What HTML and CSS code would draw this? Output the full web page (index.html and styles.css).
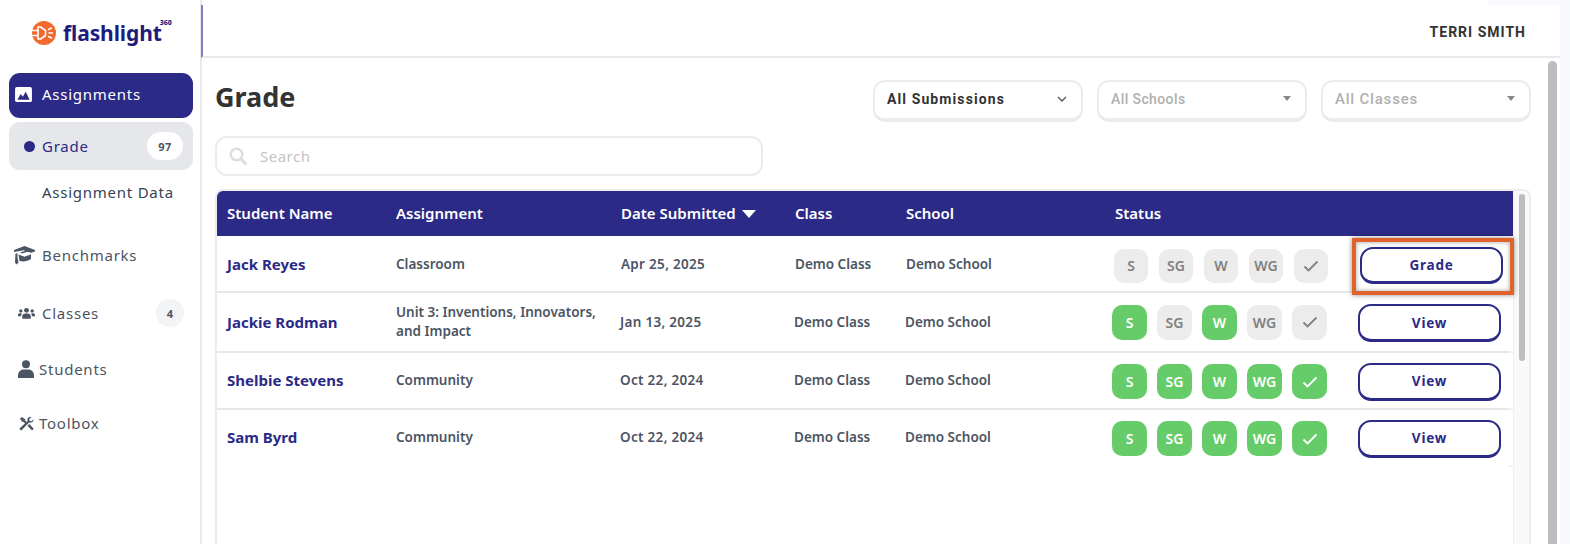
FILE: index.html
```html
<!DOCTYPE html>
<html lang="en">
<head>
  <meta charset="UTF-8" />
  <title>Flashlight 360 - Grade</title>
  <link rel="stylesheet" href="styles.css">
</head>
<body>
  <div class="app">
    <!-- Sidebar -->
    <aside class="sidebar">
      <div class="logo">
        <svg class="logo-mark" viewBox="0 0 24 24">
          <circle cx="12" cy="12" r="12" fill="#f26a2e"/>
          <path d="M0 9.500h6M0 14.500h6" stroke="#fff" stroke-width="1.600"/>
          <path d="M6 6h2.500l5 3.500v5l-5 3.500H6z" fill="none" stroke="#fff" stroke-width="1.600" stroke-linejoin="round"/>
          <path d="M16.500 8.500l3-1.500M17 12h3.500M16.500 15.500l3 1.500" stroke="#fff" stroke-width="1.400" stroke-linecap="round"/>
        </svg>
        <span class="logo-text">flashlight</span>
        <span class="logo-sup">360</span>
      </div>
      <nav class="nav">
        <a class="nav-item nav-active">
          <svg class="nav-icon" viewBox="0 0 18 16"><rect width="18" height="16" rx="2" fill="#fff"/><path d="M2.500 13.500l3.500-6 2.300 3L11.300 5l4.200 8.500z" fill="#2b2a86"/></svg>
          <span>Assignments</span>
        </a>
        <a class="nav-item nav-sub-active">
          <span class="dot"></span>
          <span>Grade</span>
          <span class="badge badge-white">97</span>
        </a>
        <a class="nav-item nav-sub">Assignment Data</a>
        <a class="nav-item nav-bench">
          <svg class="nav-icon nav-icon-cap" viewBox="0 0 21 21"><path d="M10.500 1L21 5v1.500c-1 .3-2.500.8-3.500 1.200C14 6.400 11.500 7 8 8.500L6 7.700l5-1.900-1-.6L0 7V5z" fill="#4b5563"/><path d="M4.500 9.500L10.500 11.800 17 9.300V14c-2 1.500-5 2.500-8 2.500-1.300 0-2.500-.2-3.500-.5z" fill="#4b5563"/><path d="M1.500 8.500h2v4l1 5-2 2-1.500-2z" fill="#4b5563"/></svg>
          <span>Benchmarks</span>
        </a>
        <a class="nav-item nav-classes">
          <svg class="nav-icon nav-icon-users" viewBox="0 0 18 12"><circle cx="9" cy="3.200" r="2.600" fill="#4b5563"/><circle cx="3" cy="3.800" r="1.800" fill="#4b5563"/><circle cx="15" cy="3.800" r="1.800" fill="#4b5563"/><path d="M4.500 12V9.500C4.500 7.500 6 6.500 7.500 6.500h3c1.500 0 3 1 3 3V12z" fill="#4b5563"/><path d="M0 9.500V8c0-1 .8-1.800 1.800-1.800h2.400C3.600 7 3.300 8 3.300 9.500zM18 9.500V8c0-1-.8-1.800-1.800-1.800h-2.400c.6.800.9 1.800.9 3.300z" fill="#4b5563"/></svg>
          <span>Classes</span>
          <span class="badge badge-gray">4</span>
        </a>
        <a class="nav-item nav-students">
          <svg class="nav-icon nav-icon-user" viewBox="0 0 16 18"><circle cx="8" cy="4.200" r="4" fill="#4b5563"/><path d="M0 18v-2.500C0 12 2.500 9.500 5.500 9.500h5c3 0 5.500 2.500 5.500 6V18z" fill="#4b5563"/></svg>
          <span>Students</span>
        </a>
        <a class="nav-item nav-toolbox">
          <svg class="nav-icon nav-icon-tools" viewBox="0 0 16 16"><path d="M1 3l2-2 3.500 2.500v1.300l3 3-1.500 1.500-3-3H3.700z" fill="#4b5563"/><path d="M15.500 3.500l-2.300 2.200-1.800-.5-.5-1.800L13.200 1c-1.800-.6-4 .6-4.200 2.800 0 .6.100 1 .2 1.400L1.300 12.500c-.8.800-.8 1.600-.2 2.200s1.500.6 2.200-.1l7.400-7.700c2.500.8 5.200-1 4.800-3.400z" fill="#4b5563"/><path d="M9 10.500l2-2 4 4.200c.6.600.6 1.300 0 1.900s-1.300.6-1.900 0z" fill="#4b5563"/></svg>
          <span>Toolbox</span>
        </a>
      </nav>
    </aside>

    <div class="main">
      <div class="top-strip"></div>
      <header class="topbar">
        <span class="user-name">TERRI SMITH</span>
      </header>
      <div class="content-wrap">
        <main class="content">
          <div class="title-row">
            <h1 class="page-title">Grade</h1>
            <div class="filters">
              <div class="filter filter-active">
                <span>All Submissions</span>
                <svg class="chevron" viewBox="0 0 10 6"><path d="M1 1l4 4 4-4" fill="none" stroke="#555" stroke-width="1.300"/></svg>
              </div>
              <div class="filter">
                <span>All Schools</span>
                <span class="caret"></span>
              </div>
              <div class="filter filter-classes">
                <span>All Classes</span>
                <span class="caret"></span>
              </div>
            </div>
          </div>

          <div class="search">
            <svg class="search-icon" viewBox="0 0 18 18"><circle cx="7.500" cy="7.500" r="5.800" fill="none" stroke="#dedede" stroke-width="2.400"/><path d="M12 12l4.500 4.500" stroke="#dedede" stroke-width="3" stroke-linecap="round"/></svg>
            <span>Search</span>
          </div>

          <div class="table-frame">
            <div class="table">
              <div class="table-head">
                <span>Student Name</span>
                <span>Assignment</span>
                <span class="sorted">Date Submitted<i class="sort-caret"></i></span>
                <span>Class</span>
                <span>School</span>
                <span>Status</span>
              </div>

              <div class="row row-first">
                <a class="student">Jack Reyes</a>
                <span>Classroom</span>
                <span class="date">Apr 25, 2025</span>
                <span>Demo Class</span>
                <span>Demo School</span>
                <div class="status">
                  <span class="pill">S</span><span class="pill">SG</span><span class="pill">W</span><span class="pill">WG</span>
                  <span class="pill"><svg class="check" viewBox="0 0 16 12"><path d="M1.500 6.500l4 4 9-9" fill="none" stroke="currentColor" stroke-width="1.800"/></svg></span>
                </div>
                <div class="callout"><button class="btn">Grade</button></div>
              </div>

              <div class="row row-tall">
                <a class="student">Jackie Rodman</a>
                <span class="assignment">Unit 3: Inventions, Innovators, and Impact</span>
                <span class="date">Jan 13, 2025</span>
                <span>Demo Class</span>
                <span>Demo School</span>
                <div class="status">
                  <span class="pill pill-done">S</span><span class="pill">SG</span><span class="pill pill-done">W</span><span class="pill">WG</span>
                  <span class="pill"><svg class="check" viewBox="0 0 16 12"><path d="M1.500 6.500l4 4 9-9" fill="none" stroke="currentColor" stroke-width="1.800"/></svg></span>
                </div>
                <button class="btn">View</button>
              </div>

              <div class="row">
                <a class="student">Shelbie Stevens</a>
                <span>Community</span>
                <span class="date">Oct 22, 2024</span>
                <span>Demo Class</span>
                <span>Demo School</span>
                <div class="status">
                  <span class="pill pill-done">S</span><span class="pill pill-done">SG</span><span class="pill pill-done">W</span><span class="pill pill-done">WG</span>
                  <span class="pill pill-done"><svg class="check" viewBox="0 0 16 12"><path d="M1.500 6.500l4 4 9-9" fill="none" stroke="currentColor" stroke-width="1.800"/></svg></span>
                </div>
                <button class="btn">View</button>
              </div>

              <div class="row row-last">
                <a class="student">Sam Byrd</a>
                <span>Community</span>
                <span class="date">Oct 22, 2024</span>
                <span>Demo Class</span>
                <span>Demo School</span>
                <div class="status">
                  <span class="pill pill-done">S</span><span class="pill pill-done">SG</span><span class="pill pill-done">W</span><span class="pill pill-done">WG</span>
                  <span class="pill pill-done"><svg class="check" viewBox="0 0 16 12"><path d="M1.500 6.500l4 4 9-9" fill="none" stroke="currentColor" stroke-width="1.800"/></svg></span>
                </div>
                <button class="btn">View</button>
              </div>
            </div>
            <div class="table-track"><div class="table-thumb"></div></div>
          </div>
        </main>
        <div class="page-track"></div>
      </div>
    </div>
    <div class="edge"></div>
  </div>
</body>
</html>
```

FILE: styles.css
```css
* {
  box-sizing: border-box;
}

html, body {
  margin: 0;
  height: 100%;
  overflow: hidden;
  background: #fff;
}

body {
  font-family: "Noto Sans", sans-serif;
  color: #333;
}

.app {
  display: flex;
  height: 544px;
  width: 1570px;
}

/* Sidebar */
.sidebar {
  width: 202px;
  flex-shrink: 0;
  border-right: 2px solid #e8e9ec;
  padding: 0 7px 0 9px;
}

.logo {
  height: 73px;
  display: flex;
  align-items: center;
  padding: 0 0 7px 23px;
}

.logo-mark {
  width: 24px;
  height: 24px;
  margin-right: 7px;
}

.logo-text {
  font-weight: 700;
  font-size: 21px;
  letter-spacing: -0.1px;
  color: #1f1c7c;
}

.logo-sup {
  font-weight: 800;
  font-size: 7px;
  color: #1f1c7c;
  margin: 0 0 22px -2px;
}

.nav-item {
  display: flex;
  align-items: center;
  height: 44px;
  font-size: 15px;
  letter-spacing: 0.75px;
  color: #4b5563;
}

.nav-active {
  height: 45px;
  margin-bottom: 4px;
  padding: 0 0 3px 6px;
  background: #2b2a86;
  border-radius: 11px;
  color: #fff;
}

.nav-active .nav-icon {
  width: 17px;
  height: 15px;
  margin-right: 10px;
}

.nav-sub-active {
  height: 48px;
  padding: 0 10px 0 15px;
  background: #e5e7eb;
  border-radius: 11px;
  color: #2b2a86;
}

.dot {
  width: 11px;
  height: 11px;
  margin-right: 7px;
  border-radius: 50%;
  background: #2b2a86;
}

.badge {
  margin-left: auto;
  display: flex;
  align-items: center;
  justify-content: center;
  font-size: 11px;
  font-weight: 700;
  letter-spacing: 0.4px;
  color: #4b5563;
  border-radius: 14px;
  height: 28px;
}

.badge-white {
  width: 36px;
  background: #fff;
}

.badge-gray {
  width: 28px;
  margin-right: 9px;
  background: #f3f4f6;
}

.nav-sub {
  padding-left: 33px;
  color: #374151;
}

.nav-bench {
  margin-top: 19px;
  padding-left: 5px;
}

.nav-classes {
  margin-top: 14px;
  padding-left: 9px;
}

.nav-students {
  margin-top: 12px;
  padding-left: 9px;
}

.nav-toolbox {
  margin-top: 10px;
  padding-left: 10px;
}

.nav-icon-cap {
  width: 21px;
  height: 21px;
  margin-right: 7px;
}

.nav-icon-users {
  width: 17px;
  height: 12px;
  margin-right: 7px;
}

.nav-icon-user {
  width: 16px;
  height: 18px;
  margin-right: 5px;
}

.nav-icon-tools {
  width: 15px;
  height: 15px;
  margin-right: 5px;
}

/* Top bar */
.main {
  flex: 1;
  min-width: 0;
  margin-left: -1px;
  display: flex;
  flex-direction: column;
}

.top-strip {
  height: 5px;
  flex-shrink: 0;
  width: 72px;
  margin-left: auto;
  background: #f8f9fd;
}

.topbar {
  height: 53px;
  flex-shrink: 0;
  display: flex;
  align-items: center;
  justify-content: flex-end;
  padding: 2px 34px 0 0;
  border-left: 2px solid #7d7fc2;
  border-bottom: 2px solid #e8e9ec;
}

.user-name {
  font-family: "Roboto", sans-serif;
  font-weight: 700;
  font-size: 14px;
  letter-spacing: 1px;
  color: #333;
}

.content-wrap {
  flex: 1;
  min-height: 0;
  display: flex;
  padding-right: 3px;
}

.content {
  flex: 1;
  min-width: 0;
  padding: 22px 17px 0 14px;
  overflow: hidden;
}

.page-track {
  width: 9px;
  background: #bdbdbd;
  border-radius: 5px 5px 0 0;
  margin-top: 3px;
}

.edge {
  width: 10px;
  flex-shrink: 0;
  background: #f8f9fd;
}

/* Title row */
.title-row {
  display: flex;
  justify-content: space-between;
  align-items: center;
  height: 41px;
}

.page-title {
  margin: 0 0 9px;
  font-size: 27px;
  font-weight: 700;
  color: #333;
}

.filters {
  display: flex;
  gap: 14px;
}

.filter {
  width: 210px;
  height: 42px;
  display: flex;
  align-items: center;
  justify-content: space-between;
  padding: 0 14px 2px 12px;
  border: 2px solid #ececec;
  border-bottom-width: 4px;
  border-radius: 12px;
  font-family: "Roboto", sans-serif;
  font-size: 14px;
  font-weight: 500;
  letter-spacing: 0.4px;
  color: #b0b0b0;
}

.filter-active {
  font-weight: 700;
  letter-spacing: 1.1px;
  color: #333;
}

.filter-classes {
  font-size: 15px;
  letter-spacing: 0.8px;
}

.chevron {
  width: 10px;
  height: 6px;
}

.caret {
  width: 0;
  height: 0;
  border-left: 4px solid transparent;
  border-right: 4px solid transparent;
  border-top: 5px solid #888;
}

/* Search */
.search {
  width: 548px;
  height: 40px;
  margin-top: 15px;
  display: flex;
  align-items: center;
  padding-left: 12px;
  border: 2px solid #ececec;
  border-radius: 12px;
  font-size: 15px;
  letter-spacing: 0.5px;
  color: #c4c4c4;
}

.search-icon {
  width: 18px;
  height: 18px;
  margin-right: 13px;
}

/* Table */
.table-frame {
  margin-top: 13px;
  height: 400px;
  width: 1316px;
  display: flex;
  border: 2px solid #ececec;
  border-bottom: 0;
  border-radius: 8px 8px 0 0;
  overflow: hidden;
}

.table {
  flex: 1;
  min-width: 0;
}

.table-track {
  width: 16px;
  padding: 3px 4px 0 5px;
  background: #f9f9f9;
  border-left: 1px solid #f0f0f0;
}

.table-thumb {
  height: 167px;
  background: #bdbdbd;
  border-radius: 4px;
}

.table-head,
.row {
  display: grid;
  align-items: center;
  padding-left: 10px;
}

.table-head {
  height: 45px;
  padding-bottom: 1px;
  grid-template-columns: 169px 225px 174px 111px 209px 1fr;
  background: #2b2a86;
  color: #fff;
  font-size: 15px;
  font-weight: 600;
}

.sort-caret {
  display: inline-block;
  width: 0;
  height: 0;
  margin-left: 6px;
  vertical-align: 1px;
  border-left: 7px solid transparent;
  border-right: 7px solid transparent;
  border-top: 8px solid #fff;
}

.row {
  height: 57px;
  grid-template-columns: 169px 224px 174px 111px 207px 246px 143px;
  font-size: 13.5px;
  font-weight: 600;
  line-height: 19px;
  color: #4b5563;
  background:
    linear-gradient(#e8e8e8, #e8e8e8) left bottom / calc(100% - 5px) 2px no-repeat,
    linear-gradient(#f2f2f2, #f2f2f2) left bottom / 100% 2px no-repeat;
}

.row > span,
.student {
  margin-bottom: 2px;
}

.assignment {
  max-width: 200px;
}

.date {
  letter-spacing: 0.3px;
}

.row-first {
  grid-template-columns: 169px 225px 174px 111px 208px 246px 143px;
  background: linear-gradient(#e8e8e8, #e8e8e8) left bottom / 100% 2px no-repeat;
}

.row-tall {
  height: 60px;
}

.row-tall .status {
  margin-bottom: 2px;
}

.row-last {
  background: linear-gradient(#f2f2f2, #f2f2f2) right bottom / 5px 2px no-repeat;
}

.student {
  font-size: 15px;
  font-weight: 700;
  color: #2b2a86;
}

.status {
  display: flex;
  gap: 10px;
}

.row-first .status {
  gap: 11px;
}

.pill {
  width: 35px;
  height: 35px;
  display: flex;
  align-items: center;
  justify-content: center;
  border-radius: 10px;
  background: #ececec;
  color: #808080;
  font-size: 14px;
  font-weight: 600;
}

.row-first .pill {
  width: 34px;
  height: 34px;
}

.pill-done {
  background: #66cc6a;
  color: #fff;
}

.check {
  width: 16px;
  height: 12px;
}

.btn {
  width: 143px;
  height: 38px;
  padding: 0;
  background: #fff;
  border: 2px solid #2b2a86;
  border-bottom-width: 3px;
  border-radius: 13px;
  font-family: inherit;
  font-size: 13.5px;
  font-weight: 700;
  letter-spacing: 0.8px;
  color: #2b2a86;
}

.callout {
  position: relative;
  align-self: start;
  width: 162px;
  height: 57px;
  margin: 2px 0 0 -8px;
  padding: 5px 0 0 4px;
  border: 4px solid #e2622b;
  box-shadow: 0 0 5px rgba(0, 0, 0, 0.45), inset 0 0 5px rgba(0, 0, 0, 0.35);
}

.callout .btn {
  height: 37px;
}
```
